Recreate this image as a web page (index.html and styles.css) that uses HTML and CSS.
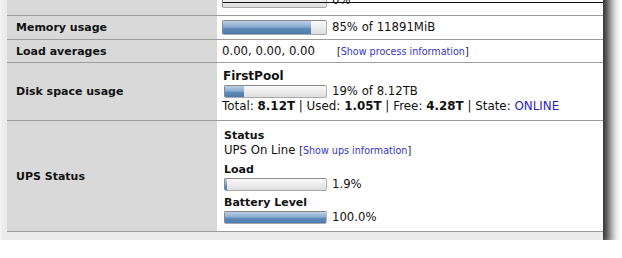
FILE: index.html
```html
<!DOCTYPE html>
<html lang="en">

<head>
  <meta charset="UTF-8">
  <title>System information</title>
  <link rel="stylesheet" href="styles.css">
</head>

<body>
  <span class="crop-line"></span>

  <div class="frame">
    <!-- first row is mostly scrolled out of view -->
    <div class="row row-cpu">
      <div class="label"></div>
      <div class="value bottom">
        <div class="meter">
          <div class="bar tall"><div class="fill" style="width:0%"></div></div>
          <span>0%</span>
        </div>
      </div>
    </div>

    <div class="row row-mem">
      <div class="label">Memory usage</div>
      <div class="value">
        <div class="meter">
          <div class="bar tall"><div class="fill" style="width:85%"></div></div>
          <span>85% of 11891MiB</span>
        </div>
      </div>
    </div>

    <div class="row row-load">
      <div class="label">Load averages</div>
      <div class="value">
        <span>0.00, 0.00, 0.00</span>
        <span class="more">[<a href="#">Show process information</a>]</span>
      </div>
    </div>

    <div class="row row-disk">
      <div class="label">Disk space usage</div>
      <div class="value">
        <div class="block">
          <div class="pool-name">FirstPool</div>
          <div class="meter indent">
            <div class="bar"><div class="fill" style="width:19%"></div></div>
            <span>19% of 8.12TB</span>
          </div>
          <div class="totals">Total: <b>8.12T</b> | Used: <b>1.05T</b> | Free: <b>4.28T</b> | State: <span class="online">ONLINE</span></div>
        </div>
      </div>
    </div>

    <div class="row row-ups">
      <div class="label">UPS Status</div>
      <div class="value">
        <div class="block indent">
          <div class="heading">Status</div>
          <div>UPS On Line <span class="more-inline">[<a href="#">Show ups information</a>]</span></div>
          <div class="heading gap">Load</div>
          <div class="meter">
            <div class="bar"><div class="fill" style="width:1.9%"></div></div>
            <span>1.9%</span>
          </div>
          <div class="heading gap-sm">Battery Level</div>
          <div class="meter">
            <div class="bar"><div class="fill" style="width:100%"></div></div>
            <span>100.0%</span>
          </div>
        </div>
      </div>
    </div>
  </div>
</body>

</html>
```

FILE: styles.css
```css
body {
  margin: 0;
  background: #fff;
  font-family: "DejaVu Sans", Verdana, sans-serif;
  font-size: 11px;
  line-height: 15px;
  color: #111;
}

.frame {
  margin: -45px 0 0 2px;
  width: 596px;
  padding: 0 0 8px 5px;
  background: #ececec;
  box-shadow: 7px 7px 10px rgba(0, 0, 0, 0.85);
}

.crop-line {
  position: absolute;
  top: 2px;
  left: 223px;
  width: 380px;
  height: 1px;
  background: #111;
  z-index: 1;
}

.row {
  display: grid;
  grid-template-columns: 210px 1fr;
  border-bottom: 1px solid #9c9c9c;
}

.row-cpu { height: 60px; }
.row-mem { height: 23px; }
.row-load { height: 22px; }
.row-disk { height: 57px; }
.row-ups { height: 110px; }

.label {
  display: flex;
  align-items: center;
  padding-left: 9px;
  background: #d9d9d9;
  font-weight: bold;
}

.value {
  display: flex;
  align-items: center;
  padding-left: 5px;
  background: #fff;
  font-size: 11.7px;
}

.value.bottom {
  align-items: flex-end;
  padding-bottom: 7px;
}

.meter {
  display: flex;
  align-items: center;
  gap: 5px;
  height: 15px;
}

.bar {
  box-sizing: border-box;
  width: 103px;
  height: 13px;
  border: 1px solid #8a8a8a;
  border-right-color: #b4b4b4;
  border-bottom-color: #a8a8a8;
  border-radius: 2px;
  background: linear-gradient(#fafafa, #ececec 50%, #dedede);
  overflow: hidden;
}

.bar.tall {
  width: 105px;
  height: 15px;
}

.fill {
  height: 100%;
  background: linear-gradient(#b9cfe6, #8cadd0 45%, #5c89b8 60%, #4d7bac);
}

.indent {
  padding-left: 2px;
}

.pool-name {
  padding-left: 1px;
  font-size: 12px;
  font-weight: bold;
}

.totals {
  font-size: 11.9px;
}

.heading {
  font-size: 11px;
  font-weight: bold;
}

.heading.gap { margin-top: 4px; }
.heading.gap-sm { margin-top: 3px; }

.more {
  margin-left: 22px;
  font-size: 9.6px;
}

.more-inline {
  font-size: 9.6px;
}

a {
  color: #3535c8;
  text-decoration: none;
}

.online {
  color: #2424c8;
}
```
